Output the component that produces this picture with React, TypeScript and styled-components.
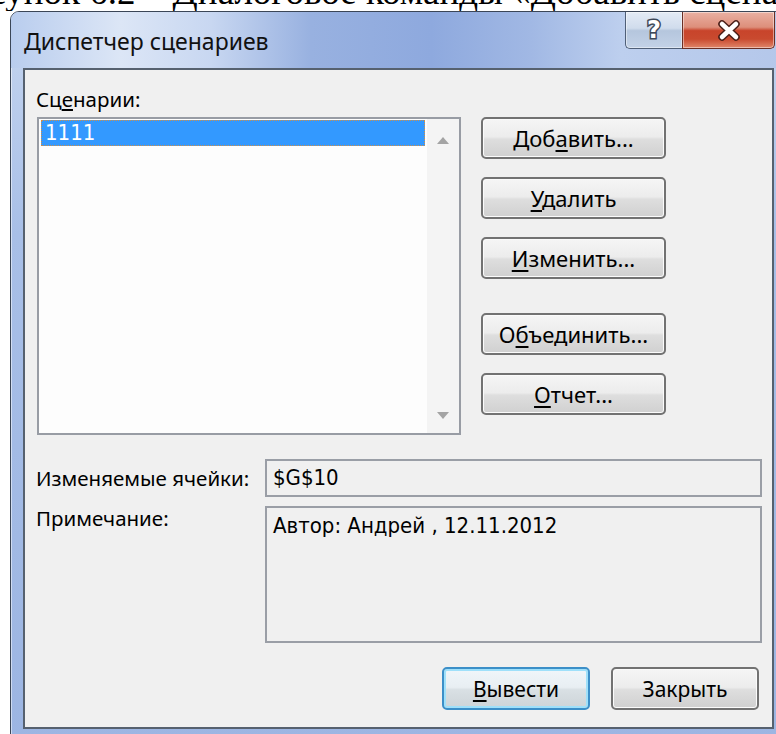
import React from "react";
import styled, { createGlobalStyle, css } from "styled-components";

const GlobalStyle = createGlobalStyle`
  html, body {
    margin: 0;
    padding: 0;
    background: #fff;
    overflow: hidden;
  }
  #root {
    width: 776px;
    height: 734px;
    overflow: hidden;
  }
`;

const uiFont = `"Noto Sans", "Open Sans", "DejaVu Sans", sans-serif`;
const fieldFont = `"DejaVu Sans Condensed", "DejaVu Sans", sans-serif`;

// page and the clipped caption line above the dialog
const Page = styled.div`
  width: 776px;
  height: 734px;
  overflow: hidden;
  background: #fff;
`;

const Caption = styled.div`
  height: 11px;
  overflow: hidden;
  white-space: nowrap;
  font-family: "Liberation Serif", "Times New Roman", serif;
  font-size: 37px;
  line-height: 37px;
  color: #000;
`;

const CaptionLine = styled.div`
  margin-top: -27px;
  text-indent: -51px;
`;

// window chrome
const Window = styled.div`
  margin-left: 10px;
  width: 774px;
  height: 740px;
  box-sizing: border-box;
  border: 1px solid #3b4657;
  border-radius: 9px 9px 0 0;
  background: linear-gradient(180deg, #c6d6f0 0%, #a8bfe7 30%, #9cb5e2 100%);
  box-shadow: inset 0 0 0 1px rgba(255, 255, 255, 0.5);
  display: flex;
  flex-direction: column;
  overflow: hidden;
`;

const TitleBar = styled.div`
  height: 56px;
  flex-shrink: 0;
  display: flex;
  align-items: flex-start;
  padding-left: 13px;
  padding-right: 8px;
  background: linear-gradient(
    90deg,
    #b9cdee 0px,
    #dce6f6 110px,
    #c8d7f1 200px,
    #98b1e0 300px,
    #8ea9de 420px,
    #a1b8e4 520px,
    #bdcfee 610px,
    #b4c7ea 776px
  );
`;

const Title = styled.div`
  align-self: center;
  margin-top: 2px;
  font-family: ${uiFont};
  font-size: 23px;
  color: #111;
  white-space: nowrap;
`;

const CaptionButtons = styled.div`
  margin-left: auto;
  display: flex;
  height: 37px;
`;

const CaptionButton = styled.div<{ $close?: boolean }>`
  box-sizing: border-box;
  height: 100%;
  display: flex;
  align-items: center;
  justify-content: center;
  border: 1px solid #4f5f77;
  border-top: none;
  ${({ $close }) =>
    $close
      ? css`
          width: 93px;
          border-color: #6a2f25;
          border-radius: 0 0 5px 0;
          background: linear-gradient(
            180deg,
            #eab0a2 0%,
            #dd8f7b 42%,
            #c8442b 52%,
            #c94a2f 75%,
            #e0876a 100%
          );
        `
      : css`
          width: 57px;
          border-right: none;
          border-radius: 0 0 0 5px;
          background: linear-gradient(
            180deg,
            #e4ebf5 0%,
            #d0dcec 45%,
            #b5c6dd 52%,
            #c3d2e7 100%
          );
        `}
  box-shadow: inset 0 0 0 1px rgba(255, 255, 255, 0.45);
`;

const HelpGlyph = styled.span`
  font-family: "DejaVu Sans", sans-serif;
  font-weight: bold;
  font-size: 24px;
  line-height: 1;
  color: #fff;
  -webkit-text-stroke: 3px #3e4858;
  paint-order: stroke fill;
`;

// client area
const Client = styled.div`
  box-sizing: border-box;
  margin: 0 9px 0 12px;
  height: 661px;
  border: 2px solid #56616f;
  background: #f0f0f0;
  padding: 15px 10px 0 11px;
  display: flex;
  flex-direction: column;
  font-family: ${uiFont};
  font-size: 20.5px;
  color: #000;
`;

const Label = styled.div<{ $top?: boolean }>`
  line-height: 28px;
  white-space: nowrap;
  ${({ $top }) =>
    $top &&
    css`
      align-self: start;
      margin-top: -2px;
    `}
`;

const ListLabel = styled(Label)`
  margin-bottom: 4px;
`;

const TopRow = styled.div`
  display: flex;
  gap: 20px;
`;

const ListBox = styled.div`
  box-sizing: border-box;
  margin-left: 1px;
  width: 424px;
  height: 318px;
  border: 2px solid #989ca4;
  background: #fdfdfd;
  display: flex;
`;

const ListItems = styled.div`
  flex: 1;
  padding: 1px 2px;
`;

const ListItem = styled.div<{ $selected?: boolean }>`
  box-sizing: border-box;
  height: 26px;
  padding-left: 3px;
  line-height: 24px;
  font-family: ${fieldFont};
  font-size: 22px;
  color: ${({ $selected }) => ($selected ? "#fff" : "#000")};
  background: ${({ $selected }) => ($selected ? "#3399ff" : "transparent")};
  border: 1px dotted ${({ $selected }) => ($selected ? "#d08f48" : "transparent")};
`;

const ScrollTrack = styled.div`
  width: 32px;
  background: #f4f4f4;
  display: flex;
  flex-direction: column;
  align-items: center;
  justify-content: space-between;
  padding: 18px 0 14px;
`;

const ButtonColumn = styled.div`
  width: 185px;
  display: flex;
  flex-direction: column;
  gap: 18px;
`;

const DialogButton = styled.button<{ $spaced?: boolean; $default?: boolean; $w?: number }>`
  box-sizing: border-box;
  width: ${({ $w }) => ($w ? `${$w}px` : "100%")};
  height: 42px;
  margin: 0;
  margin-top: ${({ $spaced }) => ($spaced ? "16px" : "0")};
  padding: 0;
  border: 2px solid #727272;
  border-radius: 5px;
  background: linear-gradient(180deg, #f5f5f5 0%, #ececec 47%, #dedede 53%, #d0d0d0 100%);
  box-shadow: inset 0 0 0 1px #fbfbfb;
  font-family: ${uiFont};
  font-size: ${({ $w }) => ($w ? "21px" : "22px")};
  color: #000;
  cursor: default;
  ${({ $default }) =>
    $default &&
    css`
      border-color: #3c8fc8;
      box-shadow: inset 0 0 0 2px #9fe0fa;
      background: linear-gradient(180deg, #f0f6fa 0%, #e8eef2 47%, #d9e0e4 53%, #cdd4d8 100%);
    `}

  u {
    text-underline-offset: 3px;
  }
`;

const FieldsGrid = styled.div`
  margin-top: 24px;
  display: grid;
  grid-template-columns: 229px 1fr;
  row-gap: 9px;
  align-items: center;
`;

const Field = styled.div<{ $h: number }>`
  box-sizing: border-box;
  height: ${({ $h }) => $h}px;
  border: 2px solid #9a9ea6;
  background: #f0f0f0;
  padding: ${({ $h }) => ($h > 50 ? "5px 6px" : "0 6px")};
  display: flex;
  align-items: ${({ $h }) => ($h > 50 ? "flex-start" : "center")};
  font-family: ${fieldFont};
  font-size: 22px;
  line-height: 26px;
  white-space: nowrap;
`;

const Footer = styled.div`
  margin-top: 24px;
  padding-right: 3px;
  display: flex;
  justify-content: flex-end;
  gap: 21px;

  button {
    height: 43px;
  }
`;

const ScrollArrow = ({ up }: { up?: boolean }) => (
  <svg width="12" height="7" viewBox="0 0 12 7">
    <polygon points={up ? "0,7 6,0 12,7" : "0,0 6,7 12,0"} fill="#a4a4a4" />
  </svg>
);

const CloseIcon = () => (
  <svg width="26" height="21" viewBox="0 0 26 21">
    <path d="M6 4 L20 17 M20 4 L6 17" stroke="#4a1f18" strokeWidth="7.5" strokeLinecap="round" />
    <path d="M6 4 L20 17 M20 4 L6 17" stroke="#fff" strokeWidth="4.5" strokeLinecap="round" />
  </svg>
);

export default function App() {
  return (
    <Page>
      <GlobalStyle />
      <Caption>
        <CaptionLine>Рисунок 6.2 – Диалоговое команды «Добавить сценарий»</CaptionLine>
      </Caption>

      <Window>
        <TitleBar>
          <Title>Диспетчер сценариев</Title>
          <CaptionButtons>
            <CaptionButton>
              <HelpGlyph>?</HelpGlyph>
            </CaptionButton>
            <CaptionButton $close>
              <CloseIcon />
            </CaptionButton>
          </CaptionButtons>
        </TitleBar>

        <Client>
          <ListLabel>
            Сц<u>е</u>нарии:
          </ListLabel>

          <TopRow>
            <ListBox>
              <ListItems>
                <ListItem $selected>1111</ListItem>
              </ListItems>
              <ScrollTrack>
                <ScrollArrow up />
                <ScrollArrow />
              </ScrollTrack>
            </ListBox>

            <ButtonColumn>
              <DialogButton>
                Доб<u>а</u>вить...
              </DialogButton>
              <DialogButton>
                <u>У</u>далить
              </DialogButton>
              <DialogButton>
                <u>И</u>зменить...
              </DialogButton>
              <DialogButton $spaced>
                О<u>б</u>ъединить...
              </DialogButton>
              <DialogButton>
                <u>О</u>тчет...
              </DialogButton>
            </ButtonColumn>
          </TopRow>

          <FieldsGrid>
            <Label>Изменяемые ячейки:</Label>
            <Field $h={38}>$G$10</Field>
            <Label $top>Примечание:</Label>
            <Field $h={137}>Автор: Андрей , 12.11.2012</Field>
          </FieldsGrid>

          <Footer>
            <DialogButton $default $w={148}>
              <u>В</u>ывести
            </DialogButton>
            <DialogButton $w={148}>Закрыть</DialogButton>
          </Footer>
        </Client>
      </Window>
    </Page>
  );
}
